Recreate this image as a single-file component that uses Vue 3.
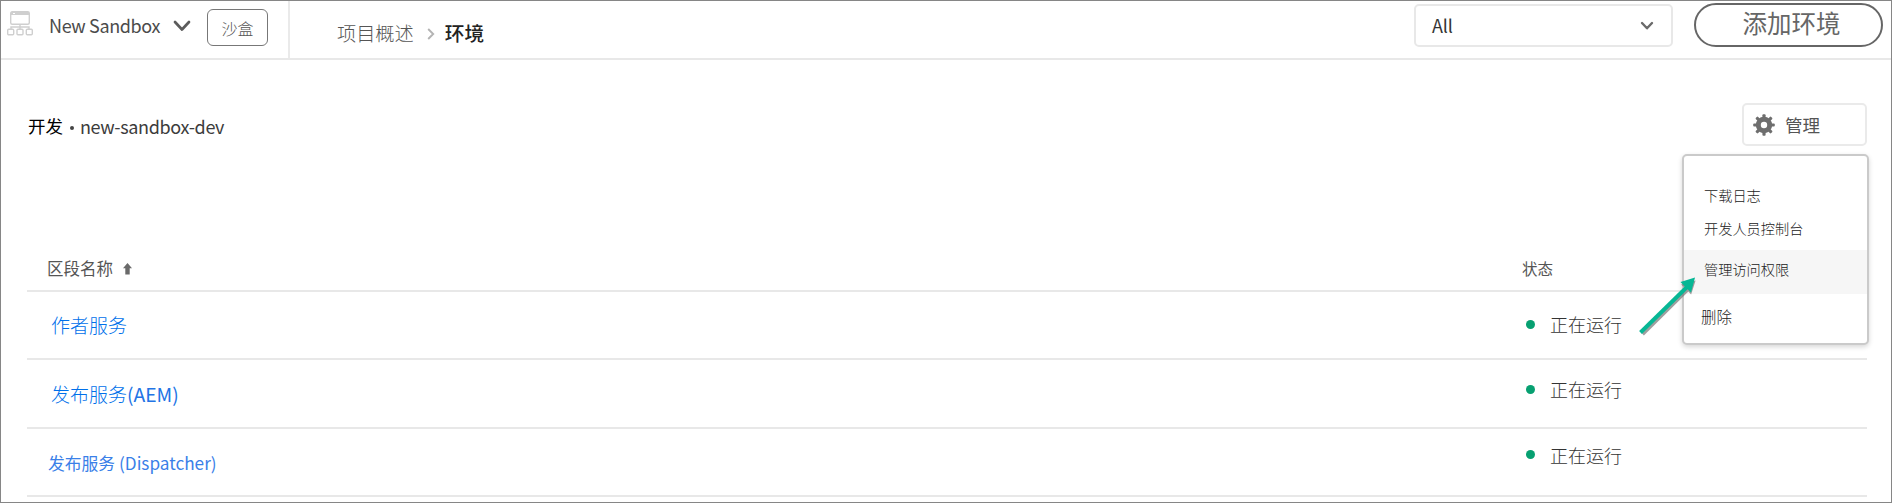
<script setup>
const rows = [
  { name: '作者服务', suffix: '', kind: 'author', status: '正在运行' },
  { name: '发布服务', suffix: '(AEM)', kind: 'publish', status: '正在运行' },
  { name: '发布服务', suffix: ' (Dispatcher)', kind: 'dispatcher', status: '正在运行' },
]
const menu = [
  { label: '下载日志', kind: 'logs' },
  { label: '开发人员控制台', kind: 'console' },
  { label: '管理访问权限', kind: 'access' },
  { label: '删除', kind: 'delete' },
]
const teeth = [0, 45, 90, 135, 180, 225, 270, 315]
</script>

<template>
  <div class="page">
    <header class="topbar">
      <div class="project">
        <svg class="site-icon" width="26" height="25" viewBox="0 0 26 25" fill="none" stroke="#cfcfcf" stroke-width="1.4">
          <rect x="3.7" y="0.7" width="18.6" height="12.6" rx="1.5" />
          <path d="M4 2.500H22" stroke-width="3" />
          <path d="M6 2.5H8" stroke="#fff" stroke-width="1" />
          <path d="M13 13V19M4 19V16H22V19" />
          <rect x="0.7" y="18.2" width="6" height="5.6" rx="1" />
          <rect x="10" y="18.2" width="6" height="5.6" rx="1" />
          <rect x="19.3" y="18.2" width="6" height="5.6" rx="1" />
        </svg>
        <span class="project-name">New Sandbox</span>
        <svg class="project-chevron" width="18" height="12" viewBox="0 0 18 12" fill="none" stroke="#5c5c5c" stroke-width="2.7" stroke-linecap="round" stroke-linejoin="round">
          <path d="M2 2L9 9.5L16 2" />
        </svg>
        <span class="badge">沙盒</span>
      </div>
      <nav class="crumbs">
        <span class="crumb">项目概述</span>
        <svg class="crumb-sep" width="8" height="12" viewBox="0 0 8 12" fill="none" stroke="#b4b4b4" stroke-width="1.9">
          <path d="M1.2 1L6.2 6L1.2 11" />
        </svg>
        <span class="crumb current">环境</span>
      </nav>
      <div class="actions">
        <div class="select">
          <span>All</span>
          <svg width="14" height="10" viewBox="0 0 14 10" fill="none" stroke="#6a6a6a" stroke-width="2.4" stroke-linecap="round" stroke-linejoin="round">
            <path d="M2 2L7 7.3L12 2" />
          </svg>
        </div>
        <button class="add">添加环境</button>
      </div>
    </header>

    <main class="content">
      <div class="env-head">
        <h1 class="env-title">
          <span class="env-type">开发</span><i class="sep"></i><span class="env-name">new-sandbox-dev</span>
        </h1>
        <div class="manage-wrap">
          <button class="manage">
            <svg width="22" height="22" viewBox="-11 -11 22 22">
              <g fill="#6e6e6e">
                <rect v-for="a in teeth" :key="a" x="-1.6" y="-10.8" width="3.2" height="6" rx="1" :transform="`rotate(${a})`" />
              </g>
              <circle r="5.7" fill="none" stroke="#6e6e6e" stroke-width="5" />
            </svg>
            <span>管理</span>
          </button>
          <div class="menu">
            <div v-for="m in menu" :key="m.kind" class="item" :class="m.kind"><span>{{ m.label }}</span></div>
            <svg class="pointer" width="62" height="64" viewBox="0 0 62 64">
              <g transform="translate(0.6 1.6)" fill="#777" stroke="#777" opacity="0.7">
                <path d="M4 57.500L49 13" stroke-width="3.6" />
                <path d="M57 4L42.5 8L48 13L52.500 18Z" stroke="none" />
              </g>
              <path d="M2.500 57.500L49 12" stroke="#06b795" stroke-width="3.9" />
              <path d="M57 2.500L42.500 7L47.500 12L53 17.500Z" fill="#06b795" />
            </svg>
          </div>
        </div>
      </div>

      <section class="table">
        <div class="thead">
          <span class="col-name">区段名称<svg class="sort" width="9" height="12" viewBox="0 0 9 12" fill="#6a6a6a"><path d="M4.500 0L9 5.200H6.700V11.500H2.300V5.200H0Z" /></svg></span>
          <span class="col-status">状态</span>
        </div>
        <div v-for="r in rows" :key="r.kind" class="row" :class="r.kind">
          <a class="link"><span>{{ r.name }}</span><span class="suffix">{{ r.suffix }}</span></a>
          <span class="status"><i class="dot"></i><span class="status-text">{{ r.status }}</span></span>
        </div>
      </section>
    </main>
  </div>
</template>

<style>
body {
  margin: 0;
  background: #fff;
}
</style>

<style scoped>
* {
  box-sizing: border-box;
}
.page {
  width: 1892px;
  height: 503px;
  overflow: hidden;
  border: 1px solid #868686;
  background: #fff;
  color: #4b4b4b;
  font-family: "Noto Sans CJK SC", "Liberation Sans", sans-serif;
}
span {
  white-space: pre;
}
button {
  font-family: inherit;
  background: #fff;
  padding: 0;
}
.topbar {
  display: flex;
  height: 59px;
  border-bottom: 2px solid #e8e8e8;
}
.project {
  display: flex;
  align-items: flex-start;
  width: 289px;
  padding-left: 6px;
  border-right: 2px solid #eaeaea;
}
.site-icon {
  margin-top: 10px;
}
.project-name {
  width: 112px;
  margin: 10px 0 0 16px;
  font-size: 18px;
  letter-spacing: -0.37px;
  line-height: 28px;
}
.project-chevron {
  margin: 19px 0 0 12px;
}
.badge {
  width: 61px;
  height: 37px;
  margin: 8px 0 0 16px;
  border: 1px solid #777;
  border-radius: 6px;
  text-align: center;
  font-size: 16px;
  font-weight: 300;
  line-height: 37px;
  color: #555;
}
.crumbs {
  display: flex;
  align-items: center;
  flex: 1;
  padding: 6px 0 0 47px;
}
.crumb {
  font-size: 19.2px;
  line-height: 28px;
  font-weight: 300;
  color: #555;
}
.crumb-sep {
  margin: 3px 10px 0 13px;
}
.crumb.current {
  font-size: 19.7px;
  font-weight: 500;
  color: #222;
}
.actions {
  display: flex;
  gap: 21px;
  padding: 2px 8px 0 0;
}
.select {
  display: flex;
  align-items: center;
  justify-content: space-between;
  width: 259px;
  height: 43px;
  margin-top: 1px;
  padding: 0 17px 0 16px;
  border: 2px solid #e8e8e8;
  border-radius: 5px;
  font-size: 18px;
  letter-spacing: -0.2px;
  color: #333;
}
.select span {
  line-height: 28px;
  margin-top: -2px;
}
.add {
  width: 189px;
  height: 44px;
  border: 2px solid #666;
  border-radius: 22px;
  font-size: 24.5px;
  line-height: 36px;
  padding: 0 0 6px 6px;
  color: #666;
}
.content {
  padding: 43px 24px 0 26px;
}
.env-head {
  display: flex;
  justify-content: space-between;
  height: 145px;
}
.env-title {
  display: flex;
  align-items: center;
  height: 46px;
  margin: 0;
  padding-left: 1px;
  font-size: 17.5px;
  font-weight: 400;
  line-height: 28px;
  color: #3c3c3c;
}
.env-type {
  color: #000;
}
.sep {
  width: 4px;
  height: 4px;
  margin: 3px 6px 0 7px;
  border-radius: 50%;
  background: #444;
}
.env-name {
  font-size: 18px;
  letter-spacing: -0.37px;
}
.manage-wrap {
  position: relative;
}
.manage {
  display: flex;
  align-items: center;
  width: 125px;
  height: 43px;
  padding-left: 9px;
  border: 2px solid #eaeaea;
  border-radius: 5px;
  font-size: 17.5px;
  line-height: 28px;
  color: #555;
}
.manage span {
  margin: 0 0 0 10px;
}
.menu {
  position: absolute;
  z-index: 2;
  top: 51px;
  right: -2px;
  width: 187px;
  height: 191px;
  padding-top: 23px;
  border: 2px solid #cacaca;
  border-radius: 5px;
  background: #fff;
  box-shadow: 0 2px 5px rgba(0, 0, 0, 0.16);
}
.item {
  display: flex;
  align-items: center;
  padding-left: 20px;
  font-size: 14.2px;
  font-weight: 300;
  line-height: 20px;
  color: #222;
}
.logs {
  height: 31px;
}
.console {
  height: 40px;
  padding-bottom: 5px;
}
.access {
  height: 44px;
  padding-bottom: 6px;
  background: #f6f6f6;
}
.delete {
  height: 48px;
  padding: 0 0 4px 17px;
  font-size: 15.500px;
}
.pointer {
  position: absolute;
  left: -46px;
  top: 119px;
}
.table {
  display: flex;
  flex-direction: column;
}
.thead,
.row {
  display: grid;
  grid-template-columns: 1495px 1fr;
  align-items: center;
  border-bottom: 2px solid #e8e8e8;
}
.thead {
  height: 44px;
  padding-bottom: 3px;
  font-size: 16.500px;
  line-height: 24px;
  color: #555;
}
.col-name {
  padding-left: 20px;
}
.sort {
  margin-left: 10px;
}
.col-status {
  font-size: 15.500px;
}
.row {
  height: 68.330px;
  align-items: start;
}
.link {
  padding: 20px 0 0 24px;
  font-size: 19px;
  font-weight: 300;
  line-height: 28px;
  color: #0070ea;
}
.author .link {
  padding-top: 19px;
}
.suffix {
  font-size: 19.300px;
  font-weight: 400;
  color: #2274e5;
}
.dispatcher .link {
  padding-left: 21px;
  font-size: 16.800px;
  font-weight: 400;
  color: #3a80e8;
}
.dispatcher .suffix {
  font-size: 17.200px;
  color: #3a80e8;
}
.status {
  display: flex;
  align-items: center;
  padding: 18px 0 0 4px;
  font-size: 18px;
  font-weight: 300;
  line-height: 28px;
  color: #333;
}
.publish .status {
  padding-top: 15px;
}
.dispatcher .status {
  padding-top: 12px;
}
.dot {
  width: 9px;
  height: 9px;
  margin-right: 15px;
  border-radius: 50%;
  background: #07a071;
}
</style>
